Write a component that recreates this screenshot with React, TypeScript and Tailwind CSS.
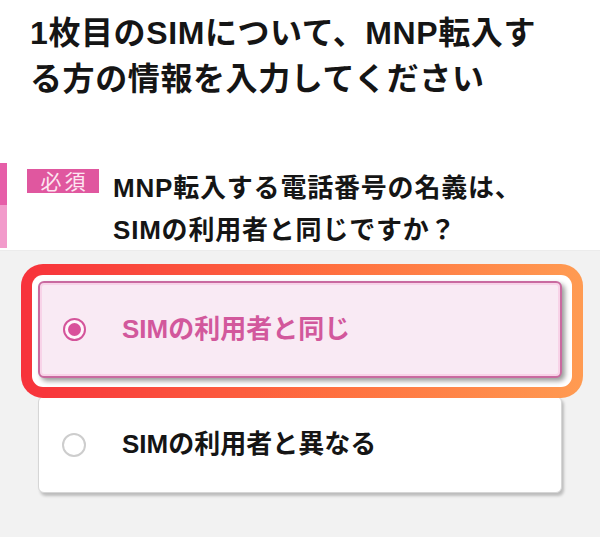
import React, { useState } from "react";

const options = [
  { id: "same", label: "SIMの利用者と同じ" },
  { id: "diff", label: "SIMの利用者と異なる" },
];

const Radio: React.FC<{ checked: boolean }> = ({ checked }) =>
  checked ? (
    <span className="flex h-[23px] w-[23px] shrink-0 items-center justify-center rounded-full border-[2.5px] border-[#d4549a] bg-[#fff5fa]">
      <span className="h-[13px] w-[13px] rounded-full bg-[#d9519b]" />
    </span>
  ) : (
    <span className="h-[24px] w-[24px] shrink-0 rounded-full border-[2px] border-[#cdcdcd] bg-white" />
  );

const App: React.FC = () => {
  const [selected, setSelected] = useState("same");

  const card = (id: string, label: string) => {
    const checked = selected === id;
    return (
      <button
        type="button"
        onClick={() => setSelected(id)}
        className={
          checked
            ? "flex h-[97px] w-full items-center rounded-[6px] border-[2px] border-[#c96aa0] bg-[#f9eaf4] pl-[23px] text-left shadow-[inset_0_0_0_2px_#f8d3e8,3px_3px_5px_rgba(0,0,0,0.4)]"
            : "flex h-[97px] w-full items-center rounded-[6px] border border-[#d6d6d6] bg-white pl-[23px] text-left shadow-[2px_3px_3px_rgba(0,0,0,0.22)]"
        }
      >
        <Radio checked={checked} />
        <span
          className={
            checked
              ? "ml-[36px] text-[26px] font-bold text-[#d2589c]"
              : "ml-[36px] text-[26px] font-bold text-[#151515]"
          }
        >
          {label}
        </span>
      </button>
    );
  };

  return (
    <div className="h-[546px] w-[600px] overflow-hidden bg-white font-['Liberation_Sans','Noto_Sans_CJK_JP',sans-serif] text-[#151515]">
      {/* page title */}
      <h1 className="px-[30px] pt-[10px] text-[32px] font-bold leading-[46px] tracking-[0.6px]">
        1枚目のSIMについて、MNP転入す
        <br />
        る方の情報を入力してください
      </h1>

      {/* question */}
      <div className="mt-[61px] flex h-[87px] items-start">
        <div className="flex h-[85px] w-[7px] shrink-0 flex-col">
          <div className="h-[42px] bg-[#e65ea8]" />
          <div className="flex-1 bg-[#f29bcb]" />
        </div>
        <span className="ml-[20px] mt-[6px] flex h-[24px] w-[72px] shrink-0 items-center justify-center bg-[#e0579f] pl-[3px] text-[21px] leading-none tracking-[3px] text-[#fde6f1]">
          必須
        </span>
        <p className="ml-[14px] mt-[4px] text-[26px] font-bold leading-[42px] tracking-[0.8px]">
          MNP転入する電話番号の名義は、
          <br />
          SIMの利用者と同じですか？
        </p>
      </div>

      {/* options */}
      <div className="h-[287px] border-t border-[#ececec] bg-[#f2f2f2] pl-[38px] pr-[38px] pt-[30px]">
        <div className="relative z-10 -mb-[20px] -ml-[17px] -mr-[21px] -mt-[17px] rounded-[22px] border-[11px] border-transparent pb-[9px] pl-[6px] pr-[10px] pt-[6px] [background:linear-gradient(#fff,#fff)_padding-box,linear-gradient(90deg,#f7323b,#ff6f3f_55%,#ff9b52)_border-box]">
          {card(options[0].id, options[0].label)}
        </div>
        <div className="mt-[18px]">{card(options[1].id, options[1].label)}</div>
      </div>
    </div>
  );
};

export default App;
